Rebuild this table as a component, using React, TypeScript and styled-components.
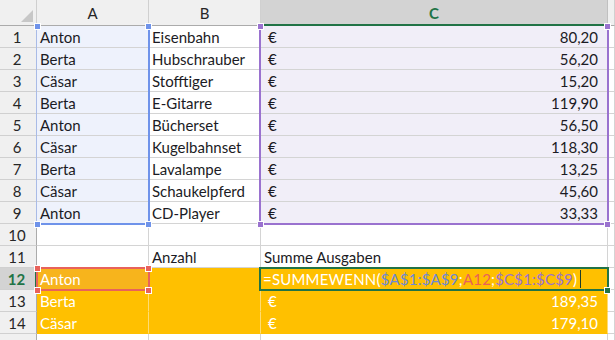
import React from "react";
import styled, { createGlobalStyle, css } from "styled-components";

const GlobalStyle = createGlobalStyle`
  html, body { margin: 0; padding: 0; background: #ffffff; }
  body { font-family: "Lato", "Noto Sans", sans-serif; }
`;

const Sheet = styled.div`
  position: relative;
  width: 615px;
  height: 340px;
  overflow: hidden;
  display: grid;
  grid-template-columns: 37px 112px 112px 347px 1fr;
  grid-template-rows: 26px;
  grid-auto-rows: 22px;
  font-size: 15px;
  color: #1b1b24;
`;

const Corner = styled.div`
  background: #f0f0f0;
  border-right: 1px solid #cfcfcf;
  border-bottom: 1px solid #ababab;
  box-sizing: border-box;
  position: relative;
  &::after {
    content: "";
    position: absolute;
    right: 3px;
    bottom: 3px;
    width: 0;
    height: 0;
    border-left: 12px solid transparent;
    border-bottom: 12px solid #c7c7c7;
  }
`;

const ColHeader = styled.div<{ $sel?: boolean }>`
  box-sizing: border-box;
  display: flex;
  align-items: center;
  justify-content: center;
  padding-top: 1px;
  background: #f0f0f0;
  border-right: 1px solid #d0d0d0;
  border-bottom: 1px solid #ababab;
  color: #262626;
  font-size: 15px;
  ${(p) =>
    p.$sel &&
    css`
      background: #d3d3d3;
      color: #217346;
      font-weight: 700;
      border-bottom: 2px solid #217346;
      border-right-color: #c0c0c0;
    `}
`;

const RowHeader = styled.div<{ $sel?: boolean }>`
  box-sizing: border-box;
  display: flex;
  align-items: center;
  justify-content: center;
  padding-right: 2px;
  background: #f0f0f0;
  border-right: 1px solid #ababab;
  border-bottom: 1px solid #d0d0d0;
  color: #262626;
  font-size: 15px;
  ${(p) =>
    p.$sel &&
    css`
      background: #d3d3d3;
      color: #217346;
      font-weight: 700;
      border-right: 2px solid #217346;
    `}
`;

type Fill = "white" | "blue" | "purple" | "orange" | "orangeDark";
const fills: Record<Fill, string> = {
  white: "#ffffff",
  blue: "#eef2fc",
  purple: "#f1eef8",
  orange: "#ffc000",
  orangeDark: "#f7b41c",
};

const Cell = styled.div<{ $fill?: Fill; $light?: boolean; $flat?: boolean }>`
  box-sizing: border-box;
  display: flex;
  align-items: center;
  padding: 1px 3px 0 3px;
  white-space: nowrap;
  overflow: visible;
  background: ${(p) => fills[p.$fill ?? "white"]};
  color: ${(p) => (p.$light ? "#ffffff" : "#1b1b24")};
  border-right: 1px solid ${(p) => (p.$flat ? "rgba(255,255,255,0.45)" : "#d4d4d4")};
  border-bottom: 1px solid ${(p) => (p.$flat ? "transparent" : "#d4d4d4")};
`;

const Money = styled(Cell)`
  justify-content: space-between;
  padding: 1px 9px 0 7px;
`;

const Formula = styled(Cell)`
  padding-left: 2px;
  letter-spacing: 0.2px;
  color: #ffffff;
`;

const Ref = styled.span<{ $c: string }>`
  color: ${(p) => p.$c};
`;

const Caret = styled.span`
  display: inline-block;
  width: 1px;
  height: 18px;
  margin-left: 3px;
  background: #1f3d2b;
`;

const Range = styled.div<{
  $c: string;
  $l: number;
  $t: number;
  $w: number;
  $h: number;
  $left?: string;
  $top?: string;
}>`
  position: absolute;
  left: ${(p) => p.$l}px;
  top: ${(p) => p.$t}px;
  width: ${(p) => p.$w}px;
  height: ${(p) => p.$h}px;
  box-sizing: border-box;
  border: 2px solid ${(p) => p.$c};
  ${(p) => p.$left && css`border-left: ${p.$left};`}
  ${(p) => p.$top && css`border-top: ${p.$top};`}
  pointer-events: none;
`;

const Handle = styled.div<{ $c: string; $x: number; $y: number }>`
  position: absolute;
  left: ${(p) => p.$x - 2.5}px;
  top: ${(p) => p.$y - 2.5}px;
  width: 5px;
  height: 5px;
  background: ${(p) => p.$c};
  outline: 1px solid #ffffff;
`;

const data: [string, string, string][] = [
  ["Anton", "Eisenbahn", "80,20"],
  ["Berta", "Hubschrauber", "56,20"],
  ["Cäsar", "Stofftiger", "15,20"],
  ["Berta", "E-Gitarre", "119,90"],
  ["Anton", "Bücherset", "56,50"],
  ["Cäsar", "Kugelbahnset", "118,30"],
  ["Berta", "Lavalampe", "13,25"],
  ["Cäsar", "Schaukelpferd", "45,60"],
  ["Anton", "CD-Player", "33,33"],
];

const corners = (c: string, x1: number, x2: number, y1: number, y2: number) => (
  <>
    <Handle $c={c} $x={x1} $y={y1} />
    <Handle $c={c} $x={x2} $y={y1} />
    <Handle $c={c} $x={x1} $y={y2} />
    <Handle $c={c} $x={x2} $y={y2} />
  </>
);

export default function App() {
  return (
    <>
      <GlobalStyle />
      <Sheet>
        <Corner />
        <ColHeader>A</ColHeader>
        <ColHeader>B</ColHeader>
        <ColHeader $sel>C</ColHeader>
        <ColHeader />

        {data.map(([a, b, c], i) => (
          <React.Fragment key={i}>
            <RowHeader>{i + 1}</RowHeader>
            <Cell $fill="blue">{a}</Cell>
            <Cell>{b}</Cell>
            <Money $fill="purple">
              <span>€</span>
              <span>{c}</span>
            </Money>
            <Cell />
          </React.Fragment>
        ))}

        <RowHeader>10</RowHeader>
        <Cell />
        <Cell />
        <Cell />
        <Cell />

        <RowHeader>11</RowHeader>
        <Cell />
        <Cell>Anzahl</Cell>
        <Cell>Summe Ausgaben</Cell>
        <Cell />

        <RowHeader $sel>12</RowHeader>
        <Cell $fill="orangeDark" $light $flat>
          Anton
        </Cell>
        <Cell $fill="orange" $flat />
        <Formula $fill="orange" $flat>
          =SUMMEWENN(<Ref $c="#6b88d8">$A$1:$A$9</Ref>;<Ref $c="#e8625b">A12</Ref>;
          <Ref $c="#9a72cf">$C$1:$C$9</Ref>)
          <Caret />
        </Formula>
        <Cell />

        <RowHeader>13</RowHeader>
        <Cell $fill="orange" $light $flat>
          Berta
        </Cell>
        <Cell $fill="orange" $flat />
        <Money $fill="orange" $light $flat>
          <span>€</span>
          <span>189,35</span>
        </Money>
        <Cell />

        <RowHeader>14</RowHeader>
        <Cell $fill="orange" $light $flat>
          Cäsar
        </Cell>
        <Cell $fill="orange" $flat />
        <Money $fill="orange" $light $flat>
          <span>€</span>
          <span>179,10</span>
        </Money>
        <Cell />

        <RowHeader />
        <Cell />
        <Cell />
        <Cell />
        <Cell />

        <Range
          $c="#6f93ea"
          $l={36}
          $t={25}
          $w={114}
          $h={200}
          $left="1px solid #a9bbe6"
          $top="1px solid transparent"
        />
        {corners("#6f93ea", 37, 148, 26, 224)}

        <Range $c="#9a72cf" $l={259} $t={25} $w={350} $h={200} $top="2px solid transparent" />
        {corners("#9a72cf", 260, 607, 26, 224)}

        <Range $c="#e8625b" $l={36} $t={267} $w={114} $h={24} />
        {corners("#e8625b", 37, 148, 268, 290)}

        <Range $c="#217346" $l={259} $t={267} $w={350} $h={24} />
        <Handle $c="#217346" $x={607} $y={290} />
      </Sheet>
    </>
  );
}
